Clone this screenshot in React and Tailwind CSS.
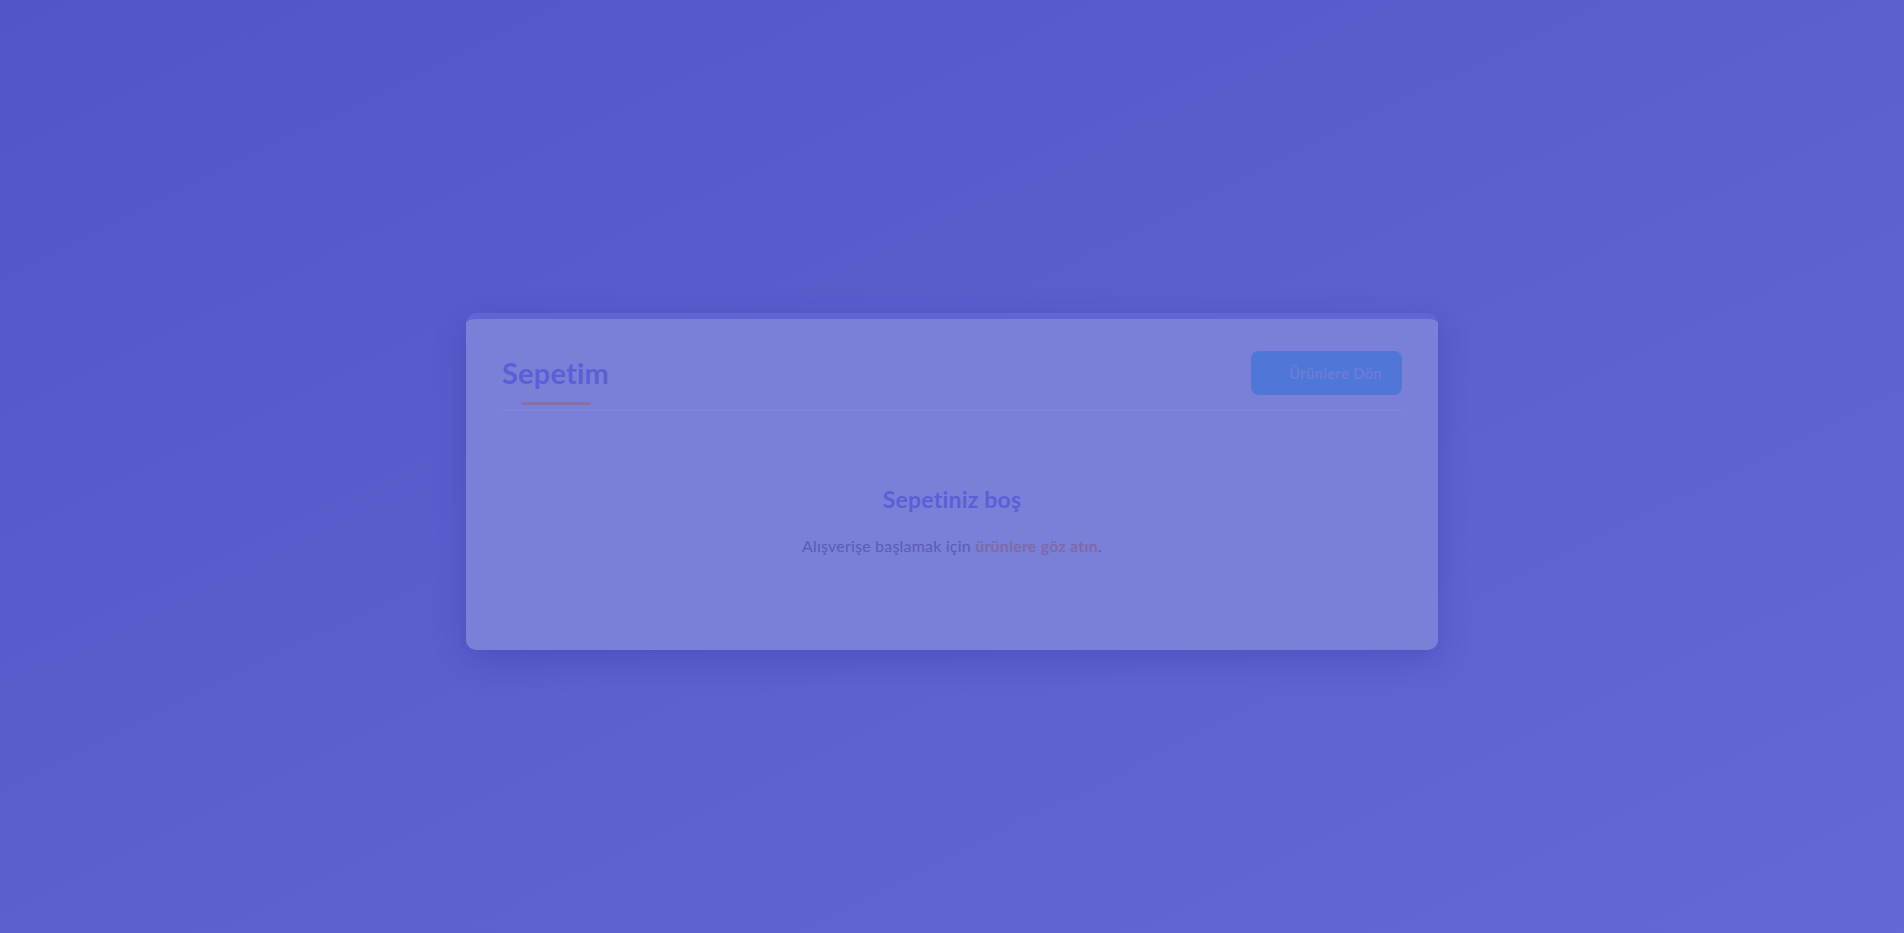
export default function App() {
  return (
    <div
      className="min-h-screen w-full flex justify-center bg-gradient-to-br from-[#5155c8] to-[#6468d6] pt-[313px]"
      style={{ fontFamily: 'Lato, "Noto Sans", sans-serif' }}
    >
      {/* Cart card */}
      <div className="w-[972px] h-[337px] self-start rounded-[10px] bg-[#7a7fd8] border-t-[6px] border-[#6064d6] shadow-[0_10px_30px_rgba(40,40,140,0.25)] px-9 pt-[32px]">
        <div className="flex items-center justify-between border-b border-[#8488dc] pb-[15px]">
          <div className="relative">
            <h1 className="text-[29px] font-bold leading-[34px] tracking-[0.2px] text-[#5a5fd6]">Sepetim</h1>
            <span className="absolute left-1/2 -translate-x-1/2 -bottom-[15px] w-[70px] h-[3px] rounded-full bg-[#8a6fa0]" />
          </div>
          <button className="w-[151px] h-[44px] rounded-[8px] bg-[#4f77d8] flex items-center justify-end pr-[20px] text-[15px] font-bold tracking-[0.2px] text-[#6d7bd6]">
            Ürünlere Dön
          </button>
        </div>

        {/* Empty state */}
        <div className="flex flex-col items-center pt-[73px]">
          <h2 className="text-[23px] font-bold leading-[30px] tracking-[0.2px] text-[#5a5fd6]">Sepetiniz boş</h2>
          <p className="mt-[20px] text-[16px] tracking-[0.2px] text-[#5a5cb8]">
            Alışverişe başlamak için{' '}
            <a href="#" className="font-bold text-[#7f6aa8]">ürünlere göz atın</a>.
          </p>
        </div>
      </div>
    </div>
  );
}
